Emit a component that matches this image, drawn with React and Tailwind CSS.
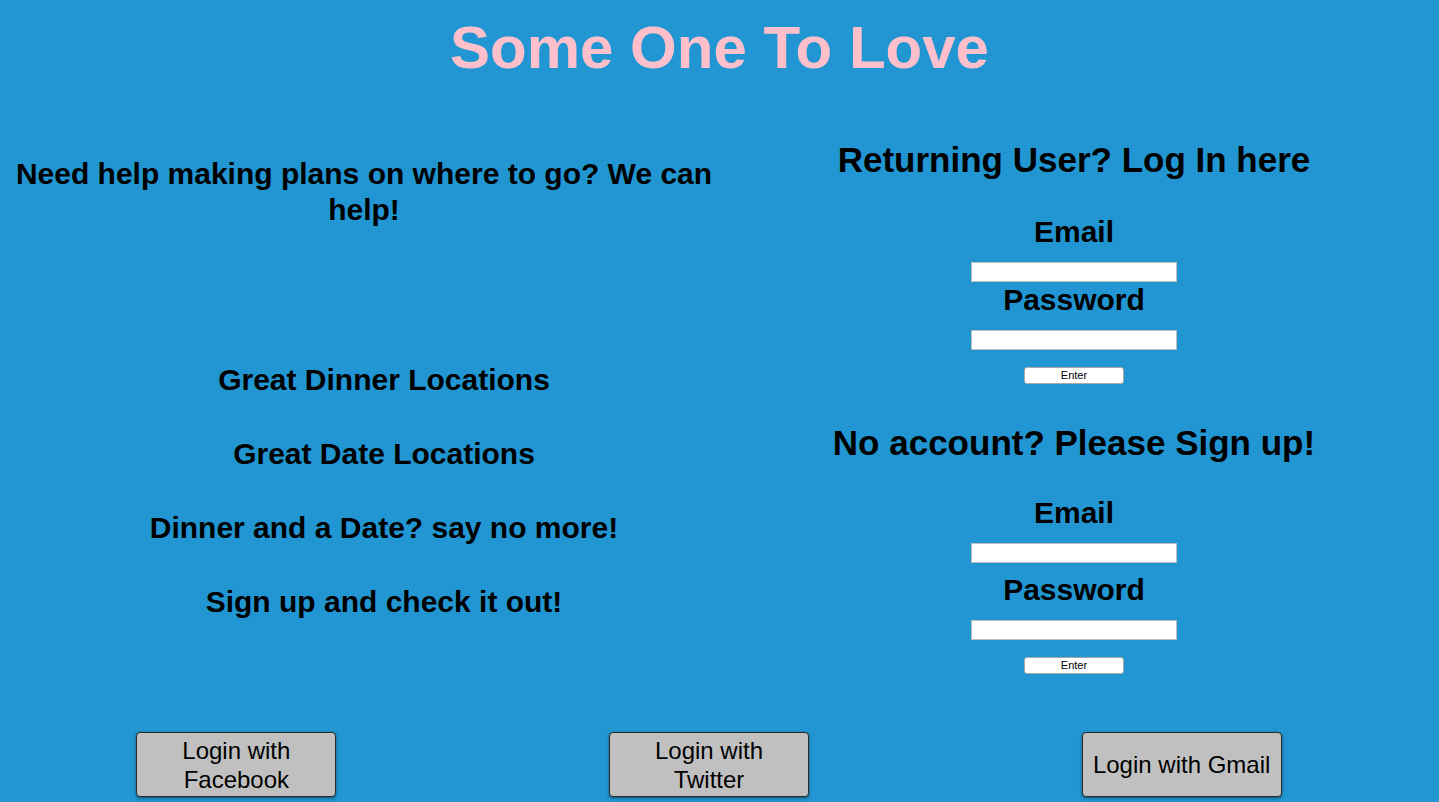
export default function App() {
  const font = { fontFamily: '"Arial Rounded MT Bold", "Liberation Sans", Arial, sans-serif' };
  const items = [
    "Great Dinner Locations",
    "Great Date Locations",
    "Dinner and a Date? say no more!",
    "Sign up and check it out!",
  ];
  const Field = ({ gap }) => (
    <div className="flex flex-col items-center">
      <div className="text-[30px] font-bold leading-[32px] text-black">Email</div>
      <input type="text" className="mt-[14px] h-[20px] w-[206px] border border-[#bdbdbd] bg-white outline-none" />
      <div className={`${gap ? "mt-[11px]" : "mt-[2px]"} text-[30px] font-bold leading-[32px] text-black`}>Password</div>
      <input type="password" className="mt-[14px] h-[20px] w-[206px] border border-[#bdbdbd] bg-white outline-none" />
      <button className="mt-[17px] h-[17px] w-[100px] rounded-[3px] border border-[#a9a9a9] bg-white text-[11px] leading-[15px] text-black [font-family:'Liberation_Sans',Arial,sans-serif]">
        Enter
      </button>
    </div>
  );
  return (
    <div className="min-h-[802px] w-full overflow-hidden bg-[#2196d2]" style={font}>
      <h1 className="pt-[13px] text-center text-[60px] font-bold leading-[70px] text-[#ffc0cb]">
        Some One To Love
      </h1>
      <div className="mt-[17px] flex w-[1420px] items-start">
        <div className="w-[728px]">
          <h2 className="mt-[56px] text-center text-[30px] font-bold leading-[36px] text-black">
            Need help making plans on where to go? We can help!
          </h2>
          <ul className="mt-[134px] flex flex-col gap-[38px] pl-[40px]">
            {items.map((t) => (
              <li key={t} className="text-center text-[30px] font-bold leading-[36px] text-black">
                {t}
              </li>
            ))}
          </ul>
        </div>
        <div className="flex w-[692px] flex-col items-center">
          <h2 className="mt-[40px] text-[35px] font-bold leading-[40px] text-black">Returning User? Log In here</h2>
          <div className="mt-[36px]">
            <Field gap={false} />
          </div>
          <h2 className="mt-[39px] text-[35px] font-bold leading-[40px] text-black">No account? Please Sign up!</h2>
          <div className="mt-[34px]">
            <Field gap={true} />
          </div>
        </div>
      </div>
      <div className="mt-[58px] flex w-[1418px] justify-around">
        {["Login with Facebook", "Login with Twitter", "Login with Gmail"].map((t) => (
          <button
            key={t}
            className="h-[65px] w-[200px] rounded-[4px] border border-[#2a2a2a] bg-[#c0c0c0] px-[7px] text-[24px] leading-[29px] text-black shadow-[0_1px_3px_rgba(0,0,0,0.5)] [font-family:'Liberation_Sans',Arial,sans-serif]"
          >
            {t}
          </button>
        ))}
      </div>
    </div>
  );
}
